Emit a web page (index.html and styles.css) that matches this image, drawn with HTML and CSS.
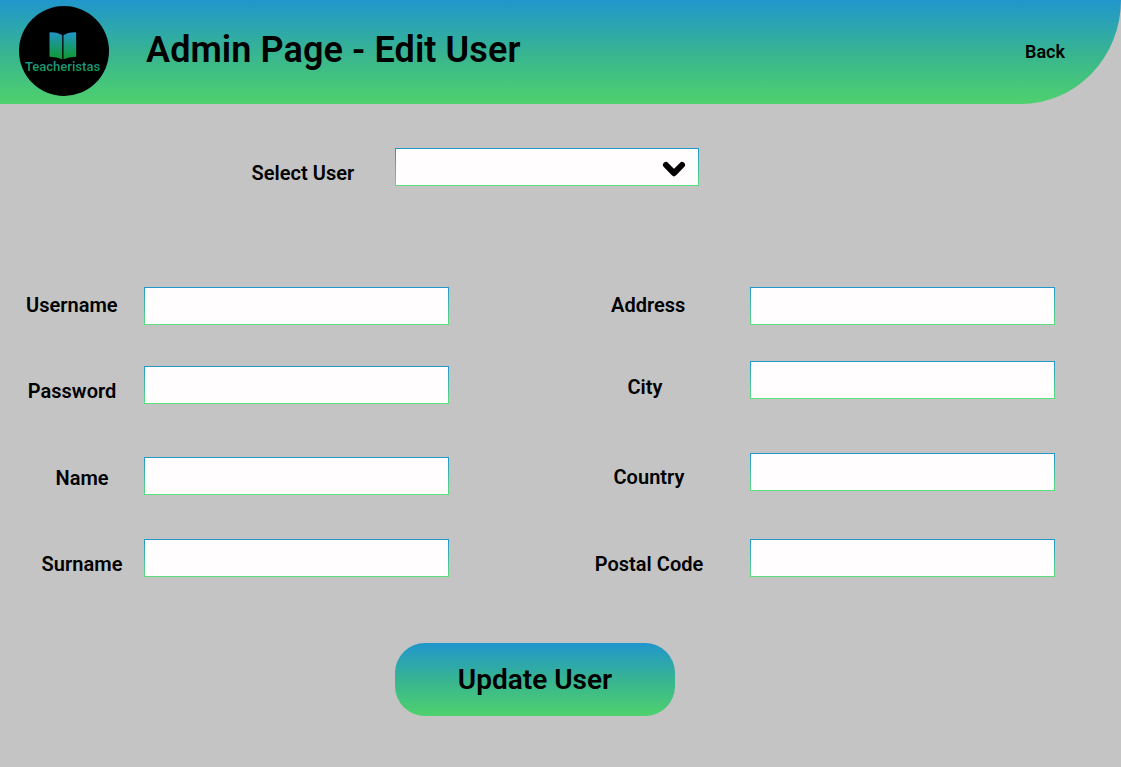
FILE: index.html
```html
<!DOCTYPE html>
<html lang="en">
<head>
<meta charset="utf-8">
<title>Admin Page - Edit User</title>
<link rel="stylesheet" href="styles.css">
</head>
<body>
<header class="header">
  <div class="logo">
    <svg class="logo-book" width="28" height="28" viewBox="0 0 28 28" aria-hidden="true">
      <defs>
        <linearGradient id="book" x1="0" y1="0" x2="0" y2="1">
          <stop offset="0" stop-color="#2196c8"/>
          <stop offset="1" stop-color="#109a2c"/>
        </linearGradient>
      </defs>
      <path fill="url(#book)" d="M.5 1.200Q.5.3 1.400.3 8.500.1 13.200 3.300V27.200Q7.500 24.600.5 24.700ZM14.500 3.300Q19 .1 26.300.3 27.200.3 27.200 1.200V24.700Q20 24.600 14.500 27.200Z"/>
    </svg>
    <span class="logo-name">Teacheristas</span>
  </div>
  <h1 class="title">Admin Page - Edit User</h1>
  <a class="back">Back</a>
</header>
<main class="page">
  <div class="field select-field">
    <label class="label">Select User</label>
    <div class="box select">
      <svg class="chevron" width="24" height="18" viewBox="0 0 24 18" aria-hidden="true">
        <path d="M4 5L12 13.200L20 5" fill="none" stroke="#000" stroke-width="6" stroke-linecap="round" stroke-linejoin="round"/>
      </svg>
    </div>
  </div>
  <form class="form">
    <div class="column personal">
      <div class="field"><label class="label username">Username</label><input class="box"></div>
      <div class="field"><label class="label password">Password</label><input class="box"></div>
      <div class="field"><label class="label name">Name</label><input class="box"></div>
      <div class="field"><label class="label surname">Surname</label><input class="box"></div>
    </div>
    <div class="column location">
      <div class="field"><label class="label address">Address</label><input class="box"></div>
      <div class="field"><label class="label city">City</label><input class="box"></div>
      <div class="field"><label class="label country">Country</label><input class="box"></div>
      <div class="field"><label class="label postal">Postal Code</label><input class="box"></div>
    </div>
  </form>
  <button class="update" type="button">Update User</button>
</main>
</body>
</html>
```
FILE: styles.css
```css
* { box-sizing: border-box; }
body {
  margin: 0;
  min-height: 767px;
  background: #c4c4c4;
  color: #000;
  font-family: Roboto, sans-serif;
  font-weight: 600;
}
.header {
  display: flex;
  align-items: flex-start;
  height: 104px;
  padding-left: 19px;
  padding-right: 56px;
  border-bottom-right-radius: 100px 104px;
  background: linear-gradient(#2096cd, #38b590 52%, #4fd16d);
}
.logo {
  display: flex;
  flex-direction: column;
  align-items: center;
  width: 90px;
  height: 90px;
  margin-top: 6px;
  padding-top: 26px;
  border-radius: 50%;
  background: #000;
}
.logo-book {
  display: block;
  margin-right: 2px;
}
.logo-name {
  font-size: 13px;
  line-height: 16px;
  margin-top: -1px;
  margin-right: 3px;
  color: transparent;
  background: linear-gradient(#1f96b8, #139a3a 85%);
  background-clip: text;
  -webkit-background-clip: text;
}
.title {
  margin: 29px 0 0 37px;
  font-size: 36px;
  line-height: 42px;
  font-weight: 600;
  letter-spacing: 0.1px;
}
.back {
  margin: 41px 0 0 auto;
  font-size: 18px;
  line-height: 22px;
}
.page { padding-top: 44px; }
.field {
  display: flex;
  align-items: flex-start;
  height: 38px;
}
.label {
  width: 144px;
  font-size: 20px;
  line-height: 24px;
  letter-spacing: 0.03px;
  white-space: nowrap;
}
.box {
  width: 305px;
  height: 38px;
  padding: 0 10px;
  border: 1px solid transparent;
  background: linear-gradient(#fffdfe, #fffdfe) padding-box, linear-gradient(#2196cd, #5be07d) border-box;
  font: inherit;
}
.select-field { padding-left: 251px; }
.select-field .label { padding: 13px 0 0 0.5px; }
.select {
  display: flex;
  justify-content: flex-end;
  align-items: center;
  width: 304px;
  padding: 4px 12px 0 0;
}
.form { display: flex; margin-top: 101px; }
.column { display: grid; align-content: start; }
.personal { grid-template-rows: 79px 91px 82px 38px; width: 594px; }
.location { grid-template-rows: 74px 92px 86px 38px; }
.location .label { width: 156px; }
.username { padding: 6px 0 0 26px; }
.password { padding: 13px 0 0 27.7px; }
.name { padding: 9px 0 0 55.5px; }
.surname { padding: 13px 0 0 41.6px; }
.location .address { padding: 6px 0 0 17px; }
.location .city { padding: 14px 0 0 33.5px; }
.location .country { padding: 12px 0 0 19.5px; }
.location .postal { padding: 13px 0 0 0.7px; }
.update {
  display: block;
  width: 280px;
  height: 73px;
  margin: 66px 0 0 395px;
  padding: 0;
  border: 0;
  border-radius: 30px;
  background: linear-gradient(#2096cd, #38b590 52%, #4fd16d);
  color: #000;
  font: 600 28px/34px Roboto, sans-serif;
}
```
